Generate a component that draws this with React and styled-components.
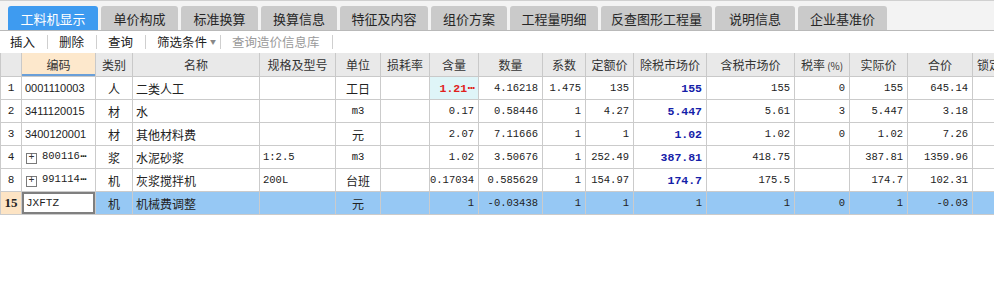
import React from "react";
import styled, { createGlobalStyle, css } from "styled-components";

const Global = createGlobalStyle`
  html, body { margin: 0; padding: 0; background: #fff; overflow: hidden; }
  body { font-family: "Noto Sans CJK SC", "Noto Sans", sans-serif; color: #222; }
`;

const Page = styled.div`
  width: 994px;
  height: 293px;
  overflow: hidden;
  background: #fff;
`;

const TabBar = styled.div`
  display: flex;
  align-items: flex-end;
  gap: 3px;
  height: 29px;
  padding-left: 8px;
  background: #f3f3f3;
  border-top: 1px solid #d0d0d0;
  border-bottom: 1px solid #b9b9b9;
`;

const Tab = styled.div`
  width: ${(p) => p.$w}px;
  height: 24px;
  display: flex;
  align-items: center;
  justify-content: center;
  font-size: 13px;
  border-radius: 3px 3px 0 0;
  background: ${(p) => (p.$active ? "#3e9bf0" : "#cacaca")};
  color: ${(p) => (p.$active ? "#fff" : "#262626")};
`;

const Toolbar = styled.div`
  display: flex;
  align-items: center;
  height: 22px;
  padding-left: 10px;
  font-size: 12.5px;
`;

const ToolItem = styled.span`
  color: ${(p) => (p.$disabled ? "#9a9a9a" : "#222")};
  display: inline-flex;
  align-items: center;
  line-height: 1;
`;

const Caret = styled.span`
  font-size: 6px;
  color: #888;
  margin-left: 3px;
`;

const Sep = styled.span`
  width: 1px;
  height: 14px;
  background: #cfcfcf;
  margin: 0 11px 0 ${(p) => (p.$tight ? 4 : 12)}px;
`;

const Table = styled.table`
  border-collapse: collapse;
  table-layout: fixed;
  width: 1022px;
  font-size: 12px;
`;

const Th = styled.th`
  height: 23px;
  padding: 0 ${(p) => (p.$left ? "0 0 4px" : "0")};
  text-align: ${(p) => (p.$left ? "left" : "center")};
  font-weight: normal;
  color: #333;
  background: ${(p) => (p.$sel ? "#fde8cc" : "#e9e9e9")};
  border: 1px solid #c9c9c9;
  border-top: none;
  ${(p) =>
    p.$sel &&
    css`
      box-shadow: inset 0 -2px 0 #6a9fd8;
    `}
  white-space: nowrap;
  overflow: hidden;
`;

const Small = styled.span`
  font-size: 10px;
`;

const Tr = styled.tr`
  height: 23px;
  background: ${(p) => (p.$sel ? "#96c8f4" : "#fff")};
`;

const mono = css`
  font-family: "Liberation Mono", "DejaVu Sans Mono", monospace;
  font-size: 10.5px;
`;

const Td = styled.td`
  padding: 0 ${(p) => (p.$align === "right" ? "4px" : "0")} 0
    ${(p) => (p.$align === "left" ? "3px" : "0")};
  border: 1px solid #cbcbcb;
  text-align: ${(p) => p.$align || "center"};
  white-space: nowrap;
  overflow: hidden;
  color: #222;
  ${(p) => p.$mono && mono}
  ${(p) => p.$code && css`font-family: "Liberation Sans", sans-serif; font-size: 11px;`}
  ${(p) =>
    p.$blue &&
    css`
      font-family: "Liberation Mono", monospace;
      color: #1420a8;
      font-weight: bold;
      font-size: 11.5px;
    `}
  ${(p) =>
    p.$red &&
    css`
      font-family: "Liberation Mono", monospace;
      color: #e0201c;
      font-weight: bold;
      font-size: 11.5px;
      background: #dff5f8;
    `}
`;

const Dots = styled.span`
  font-family: "DejaVu Sans", sans-serif;
  font-weight: bold;
  letter-spacing: -1.5px;
  font-size: ${(p) => (p.$small ? 9 : 10)}px;
`;

const NumCell = styled.td`
  padding: 0;
  border: 1px solid #cbcbcb;
  text-align: center;
  background: ${(p) => (p.$sel ? "#fde4c4" : "#fff")};
  font-family: ${(p) => (p.$sel ? '"Liberation Serif", serif' : '"Liberation Mono", monospace')};
  font-weight: ${(p) => (p.$sel ? "bold" : "normal")};
  font-size: ${(p) => (p.$sel ? "13px" : "11px")};
  color: #222;
`;

const EditCell = styled.td`
  padding: 0 0 0 4px;
  border: 1px solid #cbcbcb;
  background: #fff;
  box-shadow: inset 0 0 0 2px #7f7f7f, inset 2px 0 0 #4a8fdc;
  font-family: "Liberation Mono", monospace;
  font-size: 11px;
  text-align: left;
`;

const Expander = styled.span`
  display: inline-flex;
  align-items: center;
  justify-content: center;
  width: 9px;
  height: 9px;
  border: 1px solid #7a7a7a;
  font-family: "Liberation Mono", monospace;
  font-size: 10px;
  line-height: 1;
  margin: 0 5px 0 1px;
  vertical-align: -1px;
  color: #333;
`;

const tabs = [
  ["工料机显示", 90, true],
  ["单价构成", 77],
  ["标准换算", 77],
  ["换算信息", 76],
  ["特征及内容", 88],
  ["组价方案", 76],
  ["工程量明细", 88],
  ["反查图形工程量", 111],
  ["说明信息", 80],
  ["企业基准价", 89],
];

const cols = [21, 74, 37, 127, 76, 45, 49, 49, 64, 43, 48, 73, 88, 55, 58, 65, 50];

const rows = [
  { n: "1", code: "0001110003", t: "人", name: "二类人工", spec: "", unit: "工日", loss: "", qty: "1.21", qtyMore: true, amt: "4.16218", coef: "1.475", quota: "135", net: "155", gross: "155", tax: "0", real: "155", total: "645.14", red: true },
  { n: "2", code: "3411120015", t: "材", name: "水", spec: "", unit: "m3", loss: "", qty: "0.17", amt: "0.58446", coef: "1", quota: "4.27", net: "5.447", gross: "5.61", tax: "3", real: "5.447", total: "3.18" },
  { n: "3", code: "3400120001", t: "材", name: "其他材料费", spec: "", unit: "元", loss: "", qty: "2.07", amt: "7.11666", coef: "1", quota: "1", net: "1.02", gross: "1.02", tax: "0", real: "1.02", total: "7.26" },
  { n: "4", code: "800116", codeMore: true, exp: true, t: "浆", name: "水泥砂浆", spec: "1:2.5", unit: "m3", loss: "", qty: "1.02", amt: "3.50676", coef: "1", quota: "252.49", net: "387.81", gross: "418.75", tax: "", real: "387.81", total: "1359.96" },
  { n: "8", code: "991114", codeMore: true, exp: true, t: "机", name: "灰浆搅拌机", spec: "200L", unit: "台班", loss: "", qty: "0.17034", amt: "0.585629", coef: "1", quota: "154.97", net: "174.7", gross: "175.5", tax: "", real: "174.7", total: "102.31" },
  { n: "15", code: "JXFTZ", t: "机", name: "机械费调整", spec: "", unit: "元", loss: "", qty: "1", amt: "-0.03438", coef: "1", quota: "1", net: "1", gross: "1", tax: "0", real: "1", total: "-0.03", sel: true },
];

const isMonoUnit = (u) => /^[a-z0-9]+$/i.test(u);

export default function App() {
  return (
    <Page>
      <Global />
      <TabBar>
        {tabs.map(([label, w, active]) => (
          <Tab key={label} $w={w} $active={active}>
            {label}
          </Tab>
        ))}
      </TabBar>
      <Toolbar>
        <ToolItem>插入</ToolItem>
        <Sep />
        <ToolItem>删除</ToolItem>
        <Sep />
        <ToolItem>查询</ToolItem>
        <Sep />
        <ToolItem>
          筛选条件<Caret>▼</Caret>
        </ToolItem>
        <Sep $tight />
        <ToolItem $disabled>查询造价信息库</ToolItem>
        <Sep />
      </Toolbar>
      <Table>
        <colgroup>
          {cols.map((w, i) => (
            <col key={i} style={{ width: w }} />
          ))}
        </colgroup>
        <thead>
          <tr>
            <Th />
            <Th $sel>编码</Th>
            <Th>类别</Th>
            <Th>名称</Th>
            <Th>规格及型号</Th>
            <Th>单位</Th>
            <Th>损耗率</Th>
            <Th>含量</Th>
            <Th>数量</Th>
            <Th>系数</Th>
            <Th>定额价</Th>
            <Th>除税市场价</Th>
            <Th>含税市场价</Th>
            <Th>
              税率<Small> (%)</Small>
            </Th>
            <Th>实际价</Th>
            <Th>合价</Th>
            <Th $left>锁定</Th>
          </tr>
        </thead>
        <tbody>
          {rows.map((r) => (
            <Tr key={r.n} $sel={r.sel}>
              <NumCell $sel={r.sel}>{r.n}</NumCell>
              {r.sel ? (
                <EditCell>{r.code}</EditCell>
              ) : r.exp ? (
                <Td $align="left" $mono>
                  <Expander>+</Expander>
                  {r.code}
                  <Dots $small>···</Dots>
                </Td>
              ) : (
                <Td $align="left" $code>
                  {r.code}
                </Td>
              )}
              <Td>{r.t}</Td>
              <Td $align="left">{r.name}</Td>
              <Td $align="left" $mono>
                {r.spec}
              </Td>
              <Td $mono={isMonoUnit(r.unit)}>{r.unit}</Td>
              <Td>{r.loss}</Td>
              <Td $align="right" $mono={!r.red} $red={r.red}>
                {r.qty}
                {r.qtyMore && <Dots>···</Dots>}
              </Td>
              <Td $align="right" $mono>{r.amt}</Td>
              <Td $align="right" $mono>{r.coef}</Td>
              <Td $align="right" $mono>{r.quota}</Td>
              <Td $align="right" $mono={r.sel} $blue={!r.sel}>
                {r.net}
              </Td>
              <Td $align="right" $mono>{r.gross}</Td>
              <Td $align="right" $mono>{r.tax}</Td>
              <Td $align="right" $mono>{r.real}</Td>
              <Td $align="right" $mono>{r.total}</Td>
              <Td />
            </Tr>
          ))}
        </tbody>
      </Table>
    </Page>
  );
}
